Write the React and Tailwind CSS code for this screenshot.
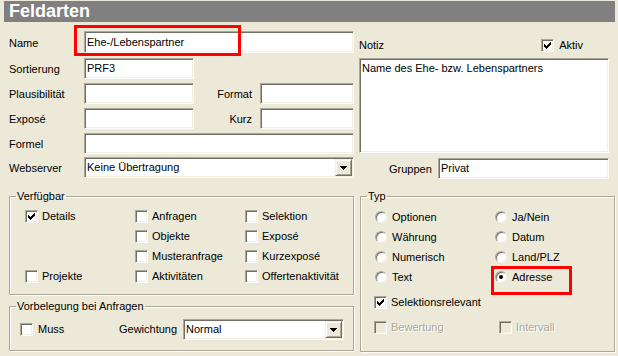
import React from "react";

const sunken =
  "border border-t-[#aca899] border-l-[#aca899] border-r-white border-b-white shadow-[inset_1px_1px_0_#716f64,inset_-1px_-1px_0_#f1efe2]";

function Check({ checked, disabled }) {
  return (
    <span
      className={`relative inline-block w-[13px] h-[13px] shrink-0 ${sunken} ${
        disabled ? "bg-[#ece9d8]" : "bg-white"
      }`}
    >
      {checked && (
        <svg
          className="absolute left-[2px] top-[2px]"
          width="7"
          height="7"
          viewBox="0 0 7 7"
          shapeRendering="crispEdges"
        >
          <path
            d="M6 0h1v1h-1zM5 1h2v1h-2zM0 2h1v1h-1zM4 2h3v1h-3zM0 3h2v1h-2zM3 3h3v1h-3zM0 4h5v1h-5zM1 5h3v1h-3zM2 6h1v1h-1z"
            fill={disabled ? "#aca899" : "#000"}
          />
        </svg>
      )}
    </span>
  );
}

function Radio({ checked }) {
  return (
    <span className="relative inline-flex items-center justify-center w-[12px] h-[12px] shrink-0 rounded-full bg-white border border-t-[#aca899] border-l-[#aca899] border-r-[#f1efe2] border-b-[#f1efe2] shadow-[inset_1px_1px_0_#716f64]">
      {checked && <span className="w-[4px] h-[4px] rounded-full bg-black" />}
    </span>
  );
}

function Field({ className, children }) {
  return (
    <div className={`h-[21px] bg-white ${sunken} flex items-center pl-[2px] ${className}`}>
      {children}
    </div>
  );
}

function Combo({ className, value }) {
  return (
    <div className={`h-[21px] bg-white ${sunken} flex items-center pl-[2px] pr-[1px] ${className}`}>
      <span>{value}</span>
      <span className="ml-auto w-[17px] h-[17px] flex items-center justify-center bg-[#ece9d8] border border-t-[#f1efe2] border-l-[#f1efe2] border-r-[#716f64] border-b-[#716f64] shadow-[inset_1px_1px_0_white,inset_-1px_-1px_0_#aca899]">
        <svg width="7" height="4" viewBox="0 0 7 4" shapeRendering="crispEdges">
          <path d="M0 0h7v1h-7zM1 1h5v1h-5zM2 2h3v1h-3zM3 3h1v1h-1z" fill="#000" />
        </svg>
      </span>
    </div>
  );
}

function CheckItem({ label, checked, disabled }) {
  return (
    <div className="flex items-center gap-[4px] h-[20px]">
      <Check checked={checked} disabled={disabled} />
      <span className={disabled ? "text-[#aca899] [text-shadow:1px_1px_0_white]" : ""}>{label}</span>
    </div>
  );
}

function RadioItem({ label, checked }) {
  return (
    <div className="flex items-center gap-[5px] h-[20px]">
      <Radio checked={checked} />
      <span>{label}</span>
    </div>
  );
}

const groupCls =
  "border border-[#aca899] shadow-[inset_1px_1px_0_white,1px_1px_0_white] m-0 p-0 min-w-0";
const legendCls = "ml-[6px] px-[1px] leading-[13px]";

export default function App() {
  return (
    <div className="relative w-[618px] h-[356px] overflow-hidden bg-[#ece9d8] text-[11px] leading-[13px] text-black font-['Liberation_Sans',Arial,sans-serif]">
      {/* Header */}
      <div className="ml-[4px] mt-[1px] w-[611px] h-[21px] bg-[#808080] pl-[5px] text-[18px] leading-[21px] font-bold text-white">
        Feldarten
      </div>

      {/* Top section */}
      <div className="flex">
        <div className="w-[355px] pl-[9px] flex flex-col">
          <div className="mt-[9px] flex items-center">
            <span className="w-[75px] pt-[2px]">Name</span>
            <Field className="w-[270px] h-[22px]">Ehe-/Lebenspartner</Field>
          </div>
          <div className="mt-[5px] flex items-center">
            <span className="w-[75px] pt-[2px]">Sortierung</span>
            <Field className="w-[110px]">PRF3</Field>
          </div>
          <div className="mt-[4px] flex items-center">
            <span className="w-[75px] pt-[2px]">Plausibilität</span>
            <Field className="w-[110px]" />
            <span className="w-[66px] text-right pr-[8px] pt-[2px]">Format</span>
            <Field className="w-[94px]" />
          </div>
          <div className="mt-[4px] flex items-center">
            <span className="w-[75px] pt-[2px]">Exposé</span>
            <Field className="w-[110px]" />
            <span className="w-[66px] text-right pr-[8px] pt-[2px]">Kurz</span>
            <Field className="w-[94px]" />
          </div>
          <div className="mt-[4px] flex items-center">
            <span className="w-[75px] pt-[2px]">Formel</span>
            <Field className="w-[270px]" />
          </div>
          <div className="mt-[3px] flex items-center">
            <span className="w-[75px] pt-[2px]">Webserver</span>
            <Combo className="w-[270px]" value="Keine Übertragung" />
          </div>
        </div>

        <div className="ml-[4px] w-[250px] flex flex-col">
          <div className="mt-[16px] h-[14px] flex items-center">
            <span>Notiz</span>
            <div className="ml-auto mr-[26px] flex items-center gap-[5px]">
              <Check checked />
              <span>Aktiv</span>
            </div>
          </div>
          <div className={`mt-[6px] h-[95px] w-[250px] bg-white ${sunken} pl-[2px] pt-[3px]`}>
            Name des Ehe- bzw. Lebenspartners
          </div>
          <div className="mt-[5px] flex items-center">
            <span className="w-[79px] pl-[30px] pt-[2px]">Gruppen</span>
            <Field className="w-[171px] h-[20px]">Privat</Field>
          </div>
        </div>
      </div>

      {/* Bottom section */}
      <div className="flex items-start mt-[11px]">
        <div className="ml-[9px] w-[345px] flex flex-col">
          <fieldset className={`${groupCls} h-[105px]`}>
            <legend className={legendCls}>Verfügbar</legend>
            <div className="pl-[15px] pt-[3px] grid grid-cols-[110px_110px_1fr]">
              <CheckItem label="Details" checked />
              <CheckItem label="Anfragen" />
              <CheckItem label="Selektion" />
              <div />
              <CheckItem label="Objekte" />
              <CheckItem label="Exposé" />
              <div />
              <CheckItem label="Musteranfrage" />
              <CheckItem label="Kurzexposé" />
              <CheckItem label="Projekte" />
              <CheckItem label="Aktivitäten" />
              <CheckItem label="Offertenaktivität" />
            </div>
          </fieldset>
          <fieldset className={`${groupCls} mt-[5px] h-[51px]`}>
            <legend className={legendCls}>Vorbelegung bei Anfragen</legend>
            <div className="pl-[10px] pt-[6px] flex items-center">
              <div className="w-[99px] flex items-center gap-[5px]">
                <Check />
                <span>Muss</span>
              </div>
              <span className="w-[64px]">Gewichtung</span>
              <Combo className="w-[161px]" value="Normal" />
            </div>
          </fieldset>
        </div>

        <fieldset className={`${groupCls} ml-[6px] w-[255px] h-[162px]`}>
          <legend className={legendCls}>Typ</legend>
          <div className="pl-[14px] pt-[4px] grid grid-cols-[120px_1fr]">
            <RadioItem label="Optionen" />
            <RadioItem label="Ja/Nein" />
            <RadioItem label="Währung" />
            <RadioItem label="Datum" />
            <RadioItem label="Numerisch" />
            <RadioItem label="Land/PLZ" />
            <RadioItem label="Text" />
            <RadioItem label="Adresse" checked />
          </div>
          <div className="pl-[13px] mt-[5px]">
            <CheckItem label="Selektionsrelevant" checked />
          </div>
          <div className="pl-[13px] mt-[5px] grid grid-cols-[125px_1fr]">
            <CheckItem label="Bewertung" disabled />
            <CheckItem label="Intervall" disabled />
          </div>
        </fieldset>
      </div>

      {/* Red annotation boxes */}
      <div className="absolute left-[74px] top-[25px] w-[167px] h-[31px] border-[3px] border-[#ff0000]" />
      <div className="absolute left-[491px] top-[266px] w-[81px] h-[29px] border-[3px] border-[#ff0000]" />
    </div>
  );
}
